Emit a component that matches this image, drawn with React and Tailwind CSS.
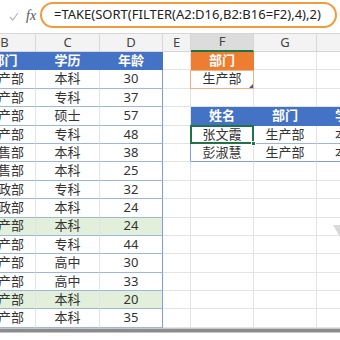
import React from "react";

const data = [
  ["生产部", "本科", "30"],
  ["生产部", "专科", "37"],
  ["生产部", "硕士", "57"],
  ["生产部", "专科", "48"],
  ["销售部", "本科", "38"],
  ["销售部", "本科", "25"],
  ["行政部", "专科", "32"],
  ["行政部", "本科", "24"],
  ["生产部", "本科", "24"],
  ["生产部", "专科", "44"],
  ["生产部", "高中", "30"],
  ["生产部", "高中", "33"],
  ["生产部", "本科", "20"],
  ["生产部", "本科", "35"],
];
const green = [8, 12];

const W = ["w-[62px]", "w-[64px]", "w-[63px]", "w-[28px]", "w-[63px]", "w-[63px]", "w-[63px]"];

function Cell({ w, className = "", children }) {
  return (
    <div
      className={`${w} shrink-0 h-full border-r border-b flex items-center justify-center relative text-[13px] text-[#333] ${className}`}
    >
      {children}
    </div>
  );
}

function Row({ r }) {
  const grid = "border-[#e3e3e3]";
  let left;
  if (r === 0) {
    left = [
      <Cell key="b" w={W[0]} className="bg-[#4472c4] text-white font-bold border-[#4472c4]">部门</Cell>,
      <Cell key="c" w={W[1]} className="bg-[#4472c4] text-white font-bold border-[#4472c4]">学历</Cell>,
      <Cell key="d" w={W[2]} className="bg-[#4472c4] text-white font-bold border-[#4472c4]">年龄</Cell>,
    ];
  } else {
    const d = data[r - 1];
    const bg = green.includes(r - 1) ? "bg-[#e2efda]" : "bg-white";
    left = [
      <Cell key="b" w={W[0]} className={`${bg} border-r-[#e3e3e3] border-b-[#9db5e0]`}>{d[0]}</Cell>,
      <Cell key="c" w={W[1]} className={`${bg} border-r-[#e3e3e3] border-b-[#9db5e0]`}>{d[1]}</Cell>,
      <Cell key="d" w={W[2]} className={`${bg} border-r-[#7f9fd8] border-b-[#9db5e0]`}>{d[2]}</Cell>,
    ];
  }

  let e = <Cell key="e" w={W[3]} className={`${grid} ${r === 4 || r === 5 ? "border-r-[#7f9fd8]" : ""}`} />;
  let f, g, h;
  if (r === 0) {
    f = <Cell key="f" w={W[4]} className="bg-[#ed7d31] text-white font-bold border-[#ed7d31]">部门</Cell>;
    g = <Cell key="g" w={W[5]} className={grid} />;
    h = <Cell key="h" w={W[6]} className={grid} />;
  } else if (r === 1) {
    f = (
      <Cell key="f" w={W[4]} className={grid}>
        <div className="absolute -left-[1px] -top-0 -right-[1px] -bottom-[1px] border border-[#f4b183]" />
        <div className="absolute right-0 bottom-0 w-0 h-0 border-l-[4px] border-l-transparent border-b-[4px] border-b-[#3c5a99]" />
        生产部
      </Cell>
    );
    g = <Cell key="g" w={W[5]} className={grid} />;
    h = <Cell key="h" w={W[6]} className={grid} />;
  } else if (r === 3) {
    f = <Cell key="f" w={W[4]} className="bg-[#4472c4] text-white font-bold border-[#4472c4]">姓名</Cell>;
    g = <Cell key="g" w={W[5]} className="bg-[#4472c4] text-white font-bold border-[#4472c4]">部门</Cell>;
    h = <Cell key="h" w={W[6]} className="bg-[#4472c4] text-white font-bold border-[#4472c4]">学历</Cell>;
  } else if (r === 4) {
    f = (
      <Cell key="f" w={W[4]} className="border-r-[#e3e3e3] border-b-[#9db5e0] z-10">
        <div className="absolute -left-[1px] -top-[1px] -right-[1px] -bottom-[1px] border-2 border-[#217346]" />
        <div className="absolute -right-[3px] -bottom-[3px] w-[5px] h-[5px] bg-[#217346] border border-white" />
        张文霞
      </Cell>
    );
    g = <Cell key="g" w={W[5]} className="border-r-[#e3e3e3] border-b-[#9db5e0]">生产部</Cell>;
    h = <Cell key="h" w={W[6]} className="border-r-[#e3e3e3] border-b-[#9db5e0]">本科</Cell>;
  } else if (r === 5) {
    f = <Cell key="f" w={W[4]} className="border-r-[#e3e3e3] border-b-[#7f9fd8]">彭淑慧</Cell>;
    g = <Cell key="g" w={W[5]} className="border-r-[#e3e3e3] border-b-[#7f9fd8]">生产部</Cell>;
    h = <Cell key="h" w={W[6]} className="border-r-[#e3e3e3] border-b-[#7f9fd8]">本科</Cell>;
  } else {
    f = <Cell key="f" w={W[4]} className={grid} />;
    g = <Cell key="g" w={W[5]} className={grid} />;
    h = <Cell key="h" w={W[6]} className={grid} />;
  }

  return (
    <div className="flex h-[18.4px]">
      {left}
      {e}
      {f}
      {g}
      {h}
    </div>
  );
}

export default function App() {
  const letters = ["B", "C", "D", "E", "F", "G", "H"];
  return (
    <div className="w-[340px] h-[340px] overflow-hidden bg-white relative font-['Noto_Sans','Noto_Sans_CJK_SC',sans-serif]">
      {/* formula bar */}
      <div className="h-[33px] flex items-center bg-white">
        <div className="w-[26px] flex justify-center pl-[2px]">
          <svg width="10" height="9" viewBox="0 0 10 9">
            <polyline points="1,5 3.8,8 9,1" fill="none" stroke="#b9b9b9" strokeWidth="1.2" />
          </svg>
        </div>
        <div className="w-[13px] text-[14px] italic text-[#555] font-['Liberation_Serif',serif] leading-none -mt-[1px]">
          fx
        </div>
        <div className="ml-[1px] w-[297px] h-[26px] -mt-[4px] border-2 border-[#f29b3c] rounded-full flex items-center pl-[12px] text-[13px] text-[#222] whitespace-nowrap">
          =TAKE(SORT(FILTER(A2:D16,B2:B16=F2),4),2)
        </div>
      </div>
      {/* sheet */}
      <div className="ml-[-26px]">
        <div className="flex h-[19px]">
          {letters.map((l, i) => (
            <div
              key={l}
              className={`${W[i]} shrink-0 h-full border-r border-t border-[#d6d6d6] flex items-center justify-center text-[13px] text-[#444] ${
                l === "F" ? "bg-[#dcdcdc] border-b-2 border-b-[#217346]" : "bg-[#f3f3f3] border-b border-b-[#d6d6d6]"
              }`}
            >
              {l}
            </div>
          ))}
        </div>
        {Array.from({ length: 15 }).map((_, r) => (
          <Row key={r} r={r} />
        ))}
      </div>
      <div className="h-[1px] bg-[#c8c8c8]" />
      <div className="h-[3px] bg-[#8c8c8c]" />
      <div className="h-[1px] bg-[#c4c4c4]" />
      <svg className="absolute left-[333px] top-[225px]" width="8" height="16" viewBox="0 0 8 16">
        <polygon points="0,0 8,0 8,14" fill="#d9d9d9" />
      </svg>
    </div>
  );
}
